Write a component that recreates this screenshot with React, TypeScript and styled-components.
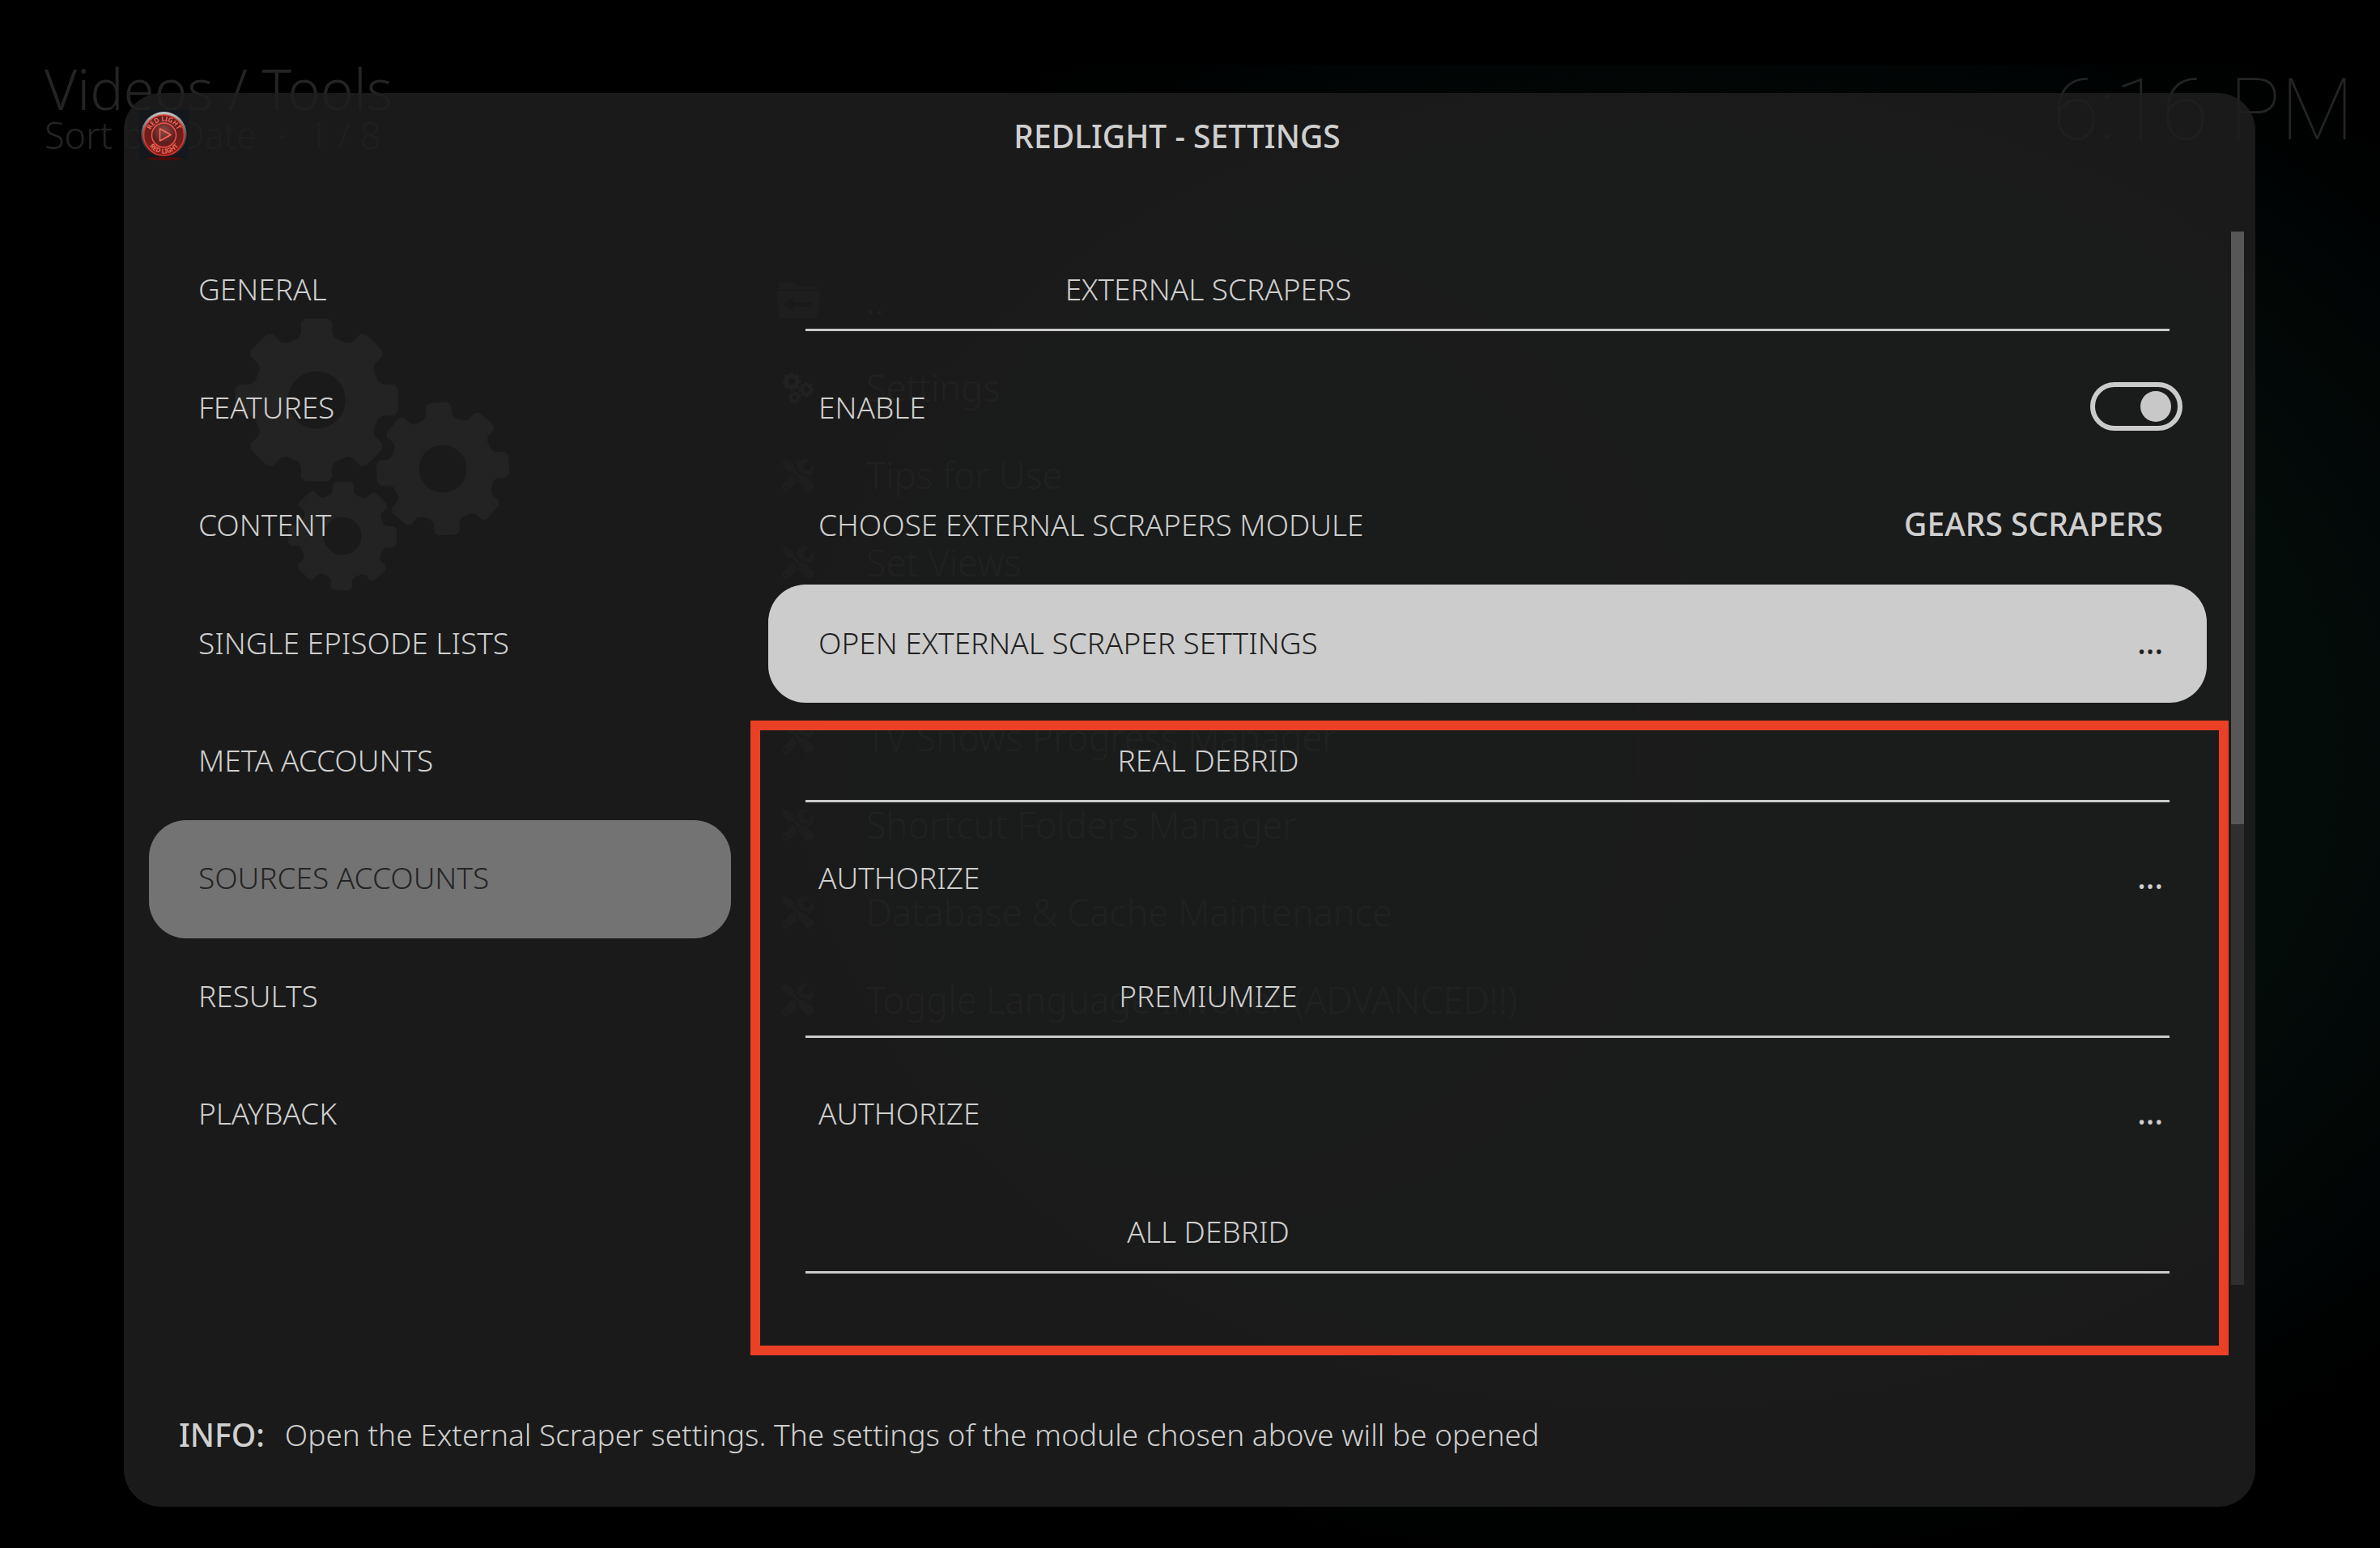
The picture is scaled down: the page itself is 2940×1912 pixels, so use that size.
import React from "react";
import styled, { createGlobalStyle } from "styled-components";
import { FaTools } from "react-icons/fa";

const Global = createGlobalStyle`
  *, *::before, *::after { box-sizing: border-box; }
  html, body { margin: 0; background: #000; }
  body { font-family: "Noto Sans", "Open Sans", sans-serif; font-weight: 300; color: #cfcfcf; }
  button { font: inherit; color: inherit; background: none; border: 0; margin: 0; cursor: pointer; }
  h1, h2, p, ul { margin: 0; padding: 0; font: inherit; list-style: none; }
`;

const Screen = styled.div`
  display: grid;
  grid-template-columns: minmax(0, 1fr);
  min-height: 100vh;
  background: #000;
  > * { grid-area: 1 / 1; }
`;

const Fanart = styled.div`
  margin: 80px 0 0 918px;
  background:
    radial-gradient(circle at 560px 820px, transparent 540px, rgba(30, 6, 8, 0.35) 570px, transparent 640px),
    radial-gradient(ellipse 66% 56% at 56% 46%, #050f0c 0%, #040c0a 60%, #000303 90%, #000 100%);
`;

const Backdrop = styled.div`
  padding: 73px 32px 0 55px;
  color: #242424;
`;

const TopBar = styled.header`
  display: flex;
  justify-content: space-between;
  align-items: flex-start;
`;

const Crumb = styled.p`
  font-size: 69px;
  line-height: 72px;
`;

const SortLine = styled.p`
  display: flex;
  gap: 26px;
  font-size: 45px;
  line-height: 44px;
`;

const Clock = styled.time`
  font-family: Roboto, sans-serif;
  font-weight: 100;
  font-size: 106px;
  line-height: 126px;
`;

const BackBody = styled.div`
  display: grid;
  grid-template-columns: 863px minmax(0, 1fr);
  margin-top: 118px;
`;

const GearArt = styled.div`
  padding: 63px 0 0 225px;
`;

const BackList = styled.ul`
  font-size: 45px;
  line-height: 104px;
  color: #2c2f2d;
`;

const BackItem = styled.li`
  display: grid;
  grid-template-columns: 136px 1fr;
  column-gap: 16px;
  align-items: center;
  height: 108px;
  svg { justify-self: center; }
`;

const Dialog = styled.section`
  position: relative;
  display: flex;
  flex-direction: column;
  margin: 115px 154px 51px 153px;
  border-radius: 46px;
  background: rgba(31, 31, 31, 0.85);
  font-size: 37px;
`;

const DialogHead = styled.header`
  display: grid;
  grid-template-columns: 61px 1fr 61px;
  align-items: center;
  height: 106px;
  padding: 0 50px 0 19px;
`;

const Title = styled.h1`
  padding-bottom: 2px;
  text-align: center;
  font-size: 39px;
  font-weight: 500;
`;

const Logo = styled.svg`
  display: block;
  width: 61px;
  height: 64px;
`;

const Body = styled.div`
  display: grid;
  grid-template-columns: 719px minmax(0, 1fr) 16px;
  margin-top: 65px;
  padding: 0 14px 0 31px;
  min-height: 1309px;
`;

const Nav = styled.nav`
  display: grid;
  grid-template-rows: repeat(9, minmax(0, 1fr));
`;

const NavButton = styled.button<{ $active?: boolean }>`
  padding: 0 61px 4px;
  text-align: left;
  border-radius: 46px;
  background: ${(p) => (p.$active ? "#737373" : "transparent")};
  color: ${(p) => (p.$active ? "#242424" : "inherit")};
`;

const Settings = styled.div`
  position: relative;
  display: grid;
  grid-template-rows: repeat(9, minmax(0, 1fr));
  margin: 0 30px 0 46px;
`;

const SectionHead = styled.h2`
  display: grid;
  grid-template-columns: 52fr 33fr;
  align-items: center;
  text-align: center;
  padding-bottom: 4px;
  background: linear-gradient(#cbcbcb, #cbcbcb) 46px calc(100% - 22px) / calc(100% - 92px) 3px no-repeat;
`;

const Row = styled.button<{ $focused?: boolean }>`
  display: flex;
  align-items: center;
  justify-content: space-between;
  padding: 0 54px 4px 62px;
  text-align: left;
  border-radius: 46px;
  background: ${(p) => (p.$focused ? "#cccccc" : "transparent")};
  color: ${(p) => (p.$focused ? "#1f1f1f" : "inherit")};
`;

const ToggleRow = styled.label`
  display: flex;
  align-items: center;
  justify-content: space-between;
  padding: 0 30px 4px 62px;
`;

const Value = styled.span`
  padding-bottom: 2px;
  font-size: 39px;
  font-weight: 500;
`;

const Switch = styled.input`
  appearance: none;
  display: flex;
  align-items: center;
  width: 114px;
  height: 60px;
  margin: 0;
  padding: 0 8px;
  border: 6px solid #cbcbcb;
  border-radius: 30px;
  &::before {
    content: "";
    width: 38px;
    height: 38px;
    border-radius: 50%;
    background: #c8c8c8;
  }
  &:checked { justify-content: flex-end; }
`;

const ScrollTrack = styled.div`
  height: 1301px;
  background: #2f2f2f;
`;

const ScrollThumb = styled.div`
  height: 732px;
  background: #575757;
`;

const Highlight = styled.div`
  position: absolute;
  inset: 604px -27px -79px -22px;
  border: 12px solid #ea4025;
  pointer-events: none;
`;

const Info = styled.footer`
  display: flex;
  gap: 25px;
  padding: 150px 68px 62px;
  line-height: 54px;
`;

const InfoLabel = styled.strong`
  font-size: 39px;
  font-weight: 500;
`;

function gearPath(cx: number, cy: number, r: number, hole: number, turn: number) {
  const profile: [number, number][] = [
    [-16.5, 0.78], [-12, 0.84], [-10.5, 0.97], [-7.5, 1], [7.5, 1], [10.5, 0.97], [12, 0.84], [16.5, 0.78],
  ];
  const pts: string[] = [];
  for (let i = 0; i < 8; i++) {
    for (const [deg, k] of profile) {
      const a = ((i * 45 + deg + turn - 90) * Math.PI) / 180;
      pts.push(`${(cx + r * k * Math.cos(a)).toFixed(1)} ${(cy + r * k * Math.sin(a)).toFixed(1)}`);
    }
  }
  return `M${pts.join("L")}ZM${cx - hole} ${cy}a${hole} ${hole} 0 1 0 ${hole * 2} 0a${hole} ${hole} 0 1 0 ${-hole * 2} 0Z`;
}

function Gears({ size, color }: { size: number; color: string }) {
  return (
    <svg width={size} height={size} viewBox="0 0 360 360" fill={color} fillRule="evenodd" stroke={color} strokeWidth="3" strokeLinejoin="round" aria-hidden="true">
      <path d={gearPath(111, 114, 100, 37, 0)} />
      <path d={gearPath(267, 199, 81, 31, -4)} />
      <path d={gearPath(143, 282, 66, 25, 1)} />
    </svg>
  );
}

function FolderBack() {
  return (
    <svg width="56" height="44" viewBox="0 0 56 44" aria-hidden="true">
      <path fill="#1a1c1a" fillRule="evenodd" d="M4 3Q4 0 7 0H22L26 5H50Q53 5 53 8H4ZM1 10H55L52 44H4ZM10 27L22 18V24H45V30H22V36Z" />
    </svg>
  );
}

function RedlightLogo() {
  return (
    <Logo viewBox="0 0 61 64" role="img" aria-label="Redlight">
      <defs>
        <radialGradient id="disc" cx="50%" cy="38%" r="60%">
          <stop offset="0" stopColor="#8d4a44" />
          <stop offset="0.5" stopColor="#5e1f1d" />
          <stop offset="1" stopColor="#8a1c18" />
        </radialGradient>
        <linearGradient id="rim" x1="0" y1="0" x2="0" y2="1">
          <stop offset="0" stopColor="#c4c8ca" />
          <stop offset="0.45" stopColor="#5d5f62" />
          <stop offset="1" stopColor="#2a1314" />
        </linearGradient>
        <path id="arcTop" d="M13 31a17.5 17.5 0 0 1 35 0" />
        <path id="arcBottom" d="M8 31a22.5 22.5 0 0 0 45 0" />
      </defs>
      <rect width="61" height="60" fill="#14171b" />
      <ellipse cx="30.500" cy="60" rx="22" ry="2" fill="#4a0d0b" />
      <circle cx="30.500" cy="30" r="28" fill="url(#rim)" />
      <circle cx="30.500" cy="31" r="25" fill="url(#disc)" stroke="#e03c32" strokeWidth="1.500" />
      <circle cx="30.500" cy="31" r="15" fill="none" stroke="#f0544a" strokeWidth="1.500" />
      <path d="M25.500 23L39 30.500L25.500 38Z" fill="none" stroke="#ff6a5c" strokeWidth="1.500" strokeLinejoin="round" />
      <g fill="#ff7468" fontFamily="Noto Sans, sans-serif" fontSize="8" fontWeight="600" textAnchor="middle">
        <text><textPath href="#arcTop" startOffset="50%">RED LIGHT</textPath></text>
        <text><textPath href="#arcBottom" startOffset="50%">RED LIGHT</textPath></text>
      </g>
    </Logo>
  );
}

const backItems = [
  "..",
  "Settings",
  "Tips for Use",
  "Set Views",
  "",
  "TV Shows Progress Manager",
  "Shortcut Folders Manager",
  "Database & Cache Maintenance",
  "Toggle Language Invoker (ADVANCED!!)",
];

const categories = [
  "GENERAL",
  "FEATURES",
  "CONTENT",
  "SINGLE EPISODE LISTS",
  "META ACCOUNTS",
  "SOURCES ACCOUNTS",
  "RESULTS",
  "PLAYBACK",
];

function BackIcon({ index }: { index: number }) {
  if (index === 0) return <FolderBack />;
  if (index === 1) return <Gears size={42} color="#2c2e2c" />;
  return <FaTools size={40} color="#1d1f1d" />;
}

function Section({ title }: { title: string }) {
  return (
    <SectionHead>
      <span>{title}</span>
    </SectionHead>
  );
}

export default function App() {
  return (
    <>
      <Global />
      <Screen>
        <Fanart />
        <Backdrop>
          <TopBar>
            <div>
              <Crumb>Videos / Tools</Crumb>
              <SortLine>
                <span>Sort by: Date</span>
                <span>·</span>
                <span>1 / 8</span>
              </SortLine>
            </div>
            <Clock>6:16 PM</Clock>
          </TopBar>
          <BackBody>
            <GearArt>
              <Gears size={360} color="#3c3c3c" />
            </GearArt>
            <BackList>
              {backItems.map((text, i) => (
                <BackItem key={i}>
                  <BackIcon index={i} />
                  <span>{text}</span>
                </BackItem>
              ))}
            </BackList>
          </BackBody>
        </Backdrop>
        <Dialog role="dialog" aria-labelledby="dialog-title">
          <DialogHead>
            <RedlightLogo />
            <Title id="dialog-title">REDLIGHT - SETTINGS</Title>
          </DialogHead>
          <Body>
            <Nav>
              {categories.map((name) => (
                <NavButton key={name} type="button" $active={name === "SOURCES ACCOUNTS"}>
                  {name}
                </NavButton>
              ))}
            </Nav>
            <Settings>
              <Section title="EXTERNAL SCRAPERS" />
              <ToggleRow htmlFor="enable">
                ENABLE
                <Switch id="enable" type="checkbox" defaultChecked />
              </ToggleRow>
              <Row type="button">
                CHOOSE EXTERNAL SCRAPERS MODULE <Value>GEARS SCRAPERS</Value>
              </Row>
              <Row type="button" $focused>
                OPEN EXTERNAL SCRAPER SETTINGS <Value>...</Value>
              </Row>
              <Section title="REAL DEBRID" />
              <Row type="button">
                AUTHORIZE <Value>...</Value>
              </Row>
              <Section title="PREMIUMIZE" />
              <Row type="button">
                AUTHORIZE <Value>...</Value>
              </Row>
              <Section title="ALL DEBRID" />
              <Highlight />
            </Settings>
            <ScrollTrack>
              <ScrollThumb />
            </ScrollTrack>
          </Body>
          <Info>
            <InfoLabel>INFO:</InfoLabel>
            <p>Open the External Scraper settings. The settings of the module chosen above will be opened</p>
          </Info>
        </Dialog>
      </Screen>
    </>
  );
}
